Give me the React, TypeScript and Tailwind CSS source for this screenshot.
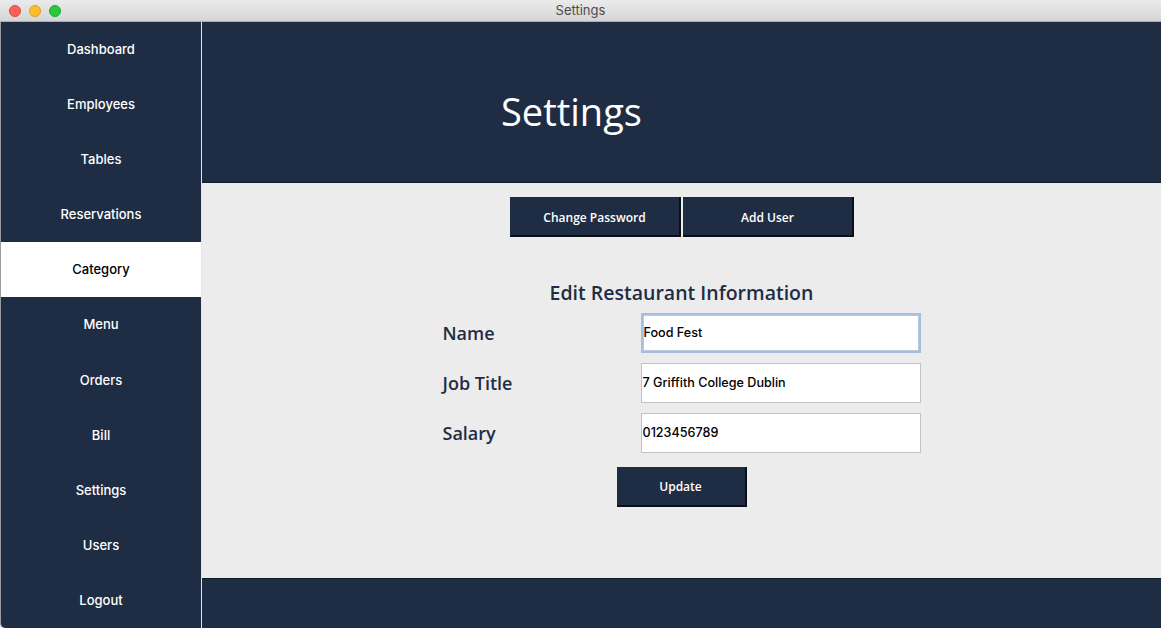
import React from "react";

const NAV = ["Dashboard","Employees","Tables","Reservations","Category","Menu","Orders","Bill","Settings","Users","Logout"];

export default function App() {
  return (
    <div className="w-[1161px] h-[628px] flex flex-col overflow-hidden bg-[#ececec]" style={{ fontFamily: "Inter, 'Liberation Sans', sans-serif" }}>
      {/* title bar */}
      <div className="relative h-[22px] shrink-0 flex items-center justify-center bg-gradient-to-b from-[#ebebeb] to-[#d5d5d5] border-b border-[#afafaf] rounded-t-[5px]">
        <div className="absolute left-[9px] top-[5px] flex gap-[8px]">
          <span className="w-[12px] h-[12px] rounded-full bg-[#fe5f57] border border-[#e0443e]" />
          <span className="w-[12px] h-[12px] rounded-full bg-[#febc2e] border border-[#dea123]" />
          <span className="w-[12px] h-[12px] rounded-full bg-[#28c840] border border-[#1aab29]" />
        </div>
        <span className="text-[13px] text-[#4d4d4d]">Settings</span>
      </div>
      <div className="flex flex-1 min-h-0">
        {/* sidebar */}
        <div className="w-[201px] shrink-0 flex flex-col bg-[#1f2d44] border-l border-[#9c9c9c] rounded-bl-[5px]">
          {NAV.map((n, i) => (
            <div
              key={n}
              className={`${i === NAV.length - 1 ? "flex-1" : i === 5 ? "h-[56px]" : "h-[55px]"} flex items-center justify-center text-[13px] font-medium ${n === "Category" ? "bg-white text-black" : "text-white"}`}
            >
              {n}
            </div>
          ))}
        </div>
        <div className="w-px bg-[#e6e6e6]" />
        {/* main */}
        <div className="flex-1 flex flex-col min-w-0">
          <div className="h-[161px] shrink-0 bg-[#1f2d44] border-b border-[#131c2b] flex items-center pl-[299px] pt-[18px]" style={{ fontFamily: "'Open Sans', sans-serif" }}>
            <h1 className="text-[38px] text-white leading-none">Settings</h1>
          </div>
          <div className="flex-1 flex flex-col items-center pt-[14px]" style={{ fontFamily: "'Open Sans', sans-serif" }}>
            <div className="flex gap-[2px] pl-[1px]">
              <button className="w-[171px] h-[40px] pt-[3px] bg-[#1f2d44] text-white text-[12px] font-semibold border-r-2 border-b-2 border-[#0a0f18]">Change Password</button>
              <button className="w-[171px] h-[40px] pt-[3px] bg-[#1f2d44] text-white text-[12px] font-semibold border-r-2 border-b-2 border-[#0a0f18]">Add User</button>
            </div>
            <h2 className="mt-[46px] text-[19.5px] font-semibold text-[#1f2d44] leading-none">Edit Restaurant Information</h2>
            <div className="mt-[10px] flex flex-col gap-[10px]">
              {[
                ["Name", "Food Fest", true],
                ["Job Title", "7 Griffith College Dublin", false],
                ["Salary", "0123456789", false],
              ].map(([label, value, focus]) => (
                <div key={label as string} className="flex items-center">
                  <span className="w-[198px] text-[18px] font-semibold text-[#1f2d44] pt-[2px]">{label}</span>
                  <div className={`w-[280px] h-[40px] bg-white flex items-center pl-[1px] pt-[2px] text-[12.6px] font-medium text-black ${focus ? "border-2 border-[#a7bfdf] shadow-[inset_0_0_0_1px_#b9c9de]" : "border border-[#c3c3c3]"}`} style={{ fontFamily: "Inter, 'Liberation Sans', sans-serif" }}>
                    {value}
                  </div>
                </div>
              ))}
            </div>
            <button className="mt-[14px] w-[130px] h-[40px] pt-[2px] bg-[#1f2d44] text-white text-[12px] font-semibold border-r-2 border-b-2 border-[#0a0f18]">Update</button>
          </div>
          <div className="h-[50px] shrink-0 bg-[#1f2d44] border-t border-[#101826]" />
        </div>
      </div>
    </div>
  );
}
